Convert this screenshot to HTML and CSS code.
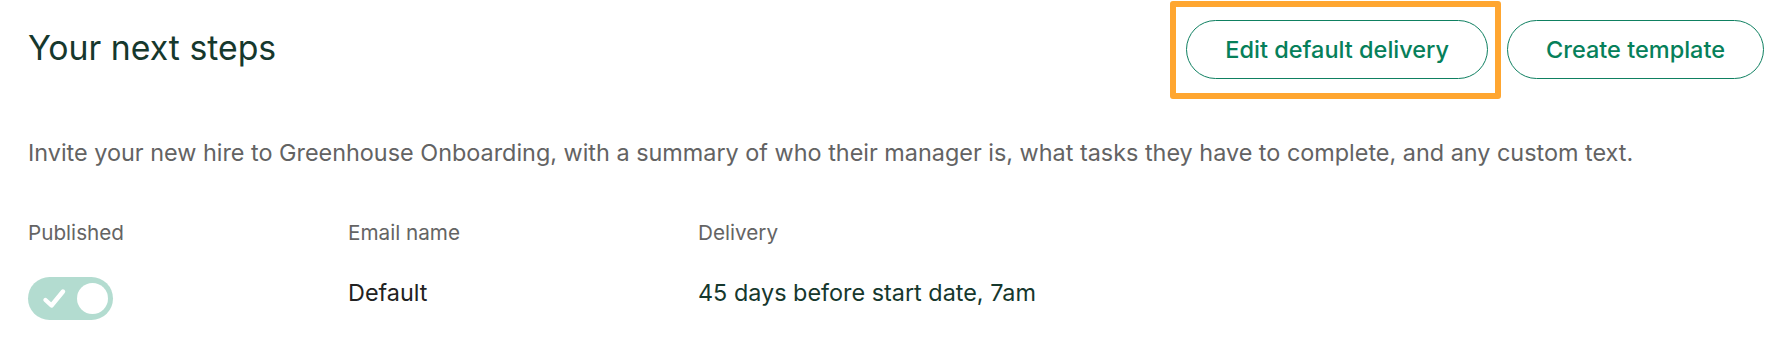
FILE: index.html
```html
<!DOCTYPE html>
<html lang="en">
<head>
<meta charset="utf-8">
<title>Your next steps</title>
<link rel="stylesheet" href="styles.css">
</head>
<body>
<main class="panel">
  <header class="panel-head">
    <h1 class="title">Your next steps</h1>
    <div class="actions">
      <span class="highlight"><button class="btn" type="button">Edit default delivery</button></span>
      <button class="btn" type="button">Create template</button>
    </div>
  </header>
  <p class="desc">Invite your new hire to Greenhouse Onboarding, with a summary of who their manager is, what tasks they have to complete, and any custom text.</p>
  <div class="table">
    <div class="th">Published</div>
    <div class="th">Email name</div>
    <div class="th">Delivery</div>
    <div class="td">
      <span class="toggle">
        <svg class="check" width="26" height="22" viewBox="0 0 26 22"><path d="M3.5 12 L9.5 17.5 L21 3.5" fill="none" stroke="#fff" stroke-width="4.4" stroke-linecap="round" stroke-linejoin="round"/></svg>
        <span class="knob"></span>
      </span>
    </div>
    <div class="td text name">Default</div>
    <div class="td text delivery">45 days before start date, 7am</div>
  </div>
</main>
</body>
</html>
```
FILE: styles.css
```css
html, body {
  margin: 0;
  padding: 0;
  background: #ffffff;
}
body {
  font-family: "Inter", "Liberation Sans", Arial, sans-serif;
}
.panel {
  padding: 0 24px 0 28px;
}
.panel-head {
  display: flex;
  justify-content: space-between;
  align-items: center;
  height: 99px;
}
.title {
  margin: 0 0 5px;
  font-size: 33.8px;
  font-weight: 400;
  color: #16382d;
}
.actions {
  display: flex;
  align-items: center;
  gap: 19px;
}
.highlight {
  position: relative;
  display: inline-flex;
}
.highlight::after {
  content: "";
  position: absolute;
  left: -16px;
  right: -13px;
  top: -19px;
  bottom: -20px;
  border: 6px solid #ffa630;
  border-radius: 3px;
  pointer-events: none;
}
.btn {
  height: 59px;
  padding: 0 38px;
  border: 1px solid #0f8061;
  border-radius: 30px;
  background: #fff;
  color: #06805a;
  font-family: inherit;
  font-size: 23.5px;
  font-weight: 500;
  cursor: pointer;
}
.desc {
  margin: 39px 0 0;
  font-size: 23.4px;
  line-height: 30px;
  color: #636363;
}
.table {
  display: grid;
  grid-template-columns: 320px 350px 1fr;
  margin-top: 53px;
}
.th {
  font-size: 20.7px;
  line-height: 24px;
  color: #646464;
}
.td {
  margin-top: 32px;
  height: 43px;
  display: flex;
  align-items: center;
}
.text {
  align-items: flex-start;
  padding-top: 1px;
  font-size: 23.4px;
}
.name {
  color: #222222;
}
.delivery {
  color: #16382d;
}
.toggle {
  display: flex;
  align-items: center;
  justify-content: space-between;
  width: 85px;
  height: 43px;
  padding: 0 5px 0 14px;
  box-sizing: border-box;
  border-radius: 22px;
  background: #b3dcd0;
}
.check {
  display: block;
}
.knob {
  width: 31px;
  height: 31px;
  border-radius: 50%;
  background: #fff;
}
```
